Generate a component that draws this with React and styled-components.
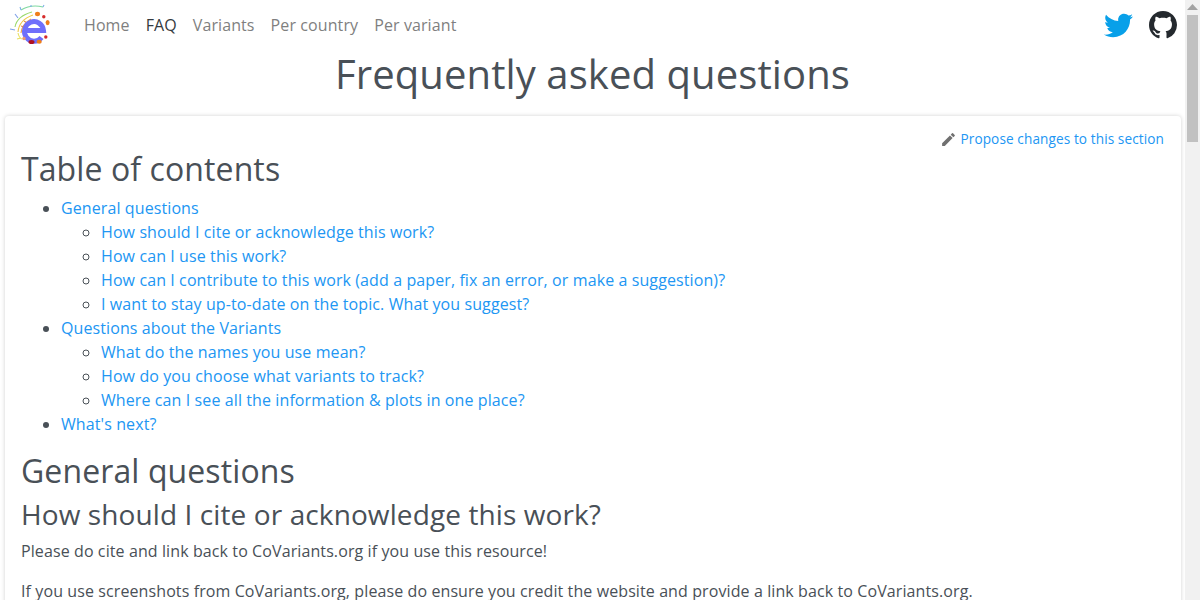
import React from "react";
import styled, { createGlobalStyle } from "styled-components";
import { FaTwitter } from "react-icons/fa";
import { MdEdit } from "react-icons/md";

const Global = createGlobalStyle`
  html, body { margin: 0; padding: 0; height: 600px; overflow: hidden; background: #fff; }
  body { font-family: "Open Sans", "Liberation Sans", sans-serif; font-size: 16px; line-height: 24px; color: #495057; letter-spacing: 0.1px; }
  * { box-sizing: border-box; }
`;

const Shell = styled.div`
  display: flex;
  width: 1200px;
  height: 600px;
  overflow: hidden;
`;
const Page = styled.div`
  flex: 1;
  min-width: 0;
  height: 600px;
  overflow: hidden;
`;
const Rail = styled.div`
  width: 15px;
  flex: none;
  background: #f1f1f1;
  display: flex;
  flex-direction: column;
  align-items: center;
`;
const Arrow = styled.div`
  height: 15px;
  display: flex;
  align-items: center;
  justify-content: center;
  color: #a3a3a3;
`;
const Thumb = styled.div`
  width: 11px;
  height: 127px;
  background: #c1c1c1;
`;

const Nav = styled.nav`
  height: 50px;
  display: flex;
  align-items: center;
  padding: 0 8px;
`;
const Brand = styled.a`
  width: 44px;
  height: 50px;
  display: flex;
  align-items: center;
  margin-right: 32px;
`;
const Links = styled.div`
  display: flex;
  gap: 16px;
  flex: 1;
`;
const NavLink = styled.a`
  color: ${(p) => (p.$active ? "#343a40" : "#7f7f7f")};
  text-decoration: none;
`;
const Social = styled.div`
  display: flex;
  align-items: center;
  gap: 16px;
`;

const Title = styled.h1`
  margin: 0;
  font-size: 40px;
  line-height: 48px;
  font-weight: 400;
  text-align: center;
  height: 66px;
`;
const Card = styled.section`
  margin: 0 4px 0 5px;
  padding: 12px 16px 0;
  background: #fff;
  border-radius: 4px;
  box-shadow: 0 0 4px rgba(0, 0, 0, 0.18);
  height: 600px;
`;
const EditRow = styled.div`
  display: flex;
  justify-content: flex-end;
  align-items: center;
  gap: 3px;
  height: 22px;
  padding-right: 1px;
  font-size: 13.6px;
`;
const Link = styled.a`
  color: #2196f3;
  text-decoration: none;
`;
const H2 = styled.h2`
  margin: 0 0 7px;
  font-size: 32px;
  line-height: 38px;
  font-weight: 400;
`;
const H3 = styled.h3`
  margin: 0 0 8px;
  font-size: 28px;
  line-height: 34px;
  font-weight: 400;
`;
const TocHead = styled(H2)`
  margin-bottom: 8px;
`;
const List = styled.ul`
  margin: 0 0 16px;
  padding-left: 40px;
  list-style: disc;
`;
const SubList = styled.ul`
  margin: 0;
  padding-left: 40px;
  list-style: circle;
`;
const Para = styled.p`
  margin: 0 0 16px;
`;

const Logo = () => (
  <svg width="44" height="50" viewBox="8 0 44 50" fill="none">
    <g strokeWidth="1.1" fill="none">
      <path d="M21 10 Q31 4 43 7" stroke="#7fd8a0" />
      <path d="M21 10 l-1 -3 M43 7 l1 -2 M31 7 l0 -2" stroke="#7fb0e8" />
      <path d="M15 27 Q17 16 32 12" stroke="#9ad86a" />
      <path d="M18 32 Q19 20 33 15" stroke="#f0c84a" />
      <path d="M21 33 Q22 24 31 19" stroke="#f2a64a" />
      <path d="M10 29 l5 1 M15 14 l3 4" stroke="#7fa0e8" />
      <path d="M18 33 Q19 38 22 39 M21 38 l-4 1" stroke="#e8e060" />
      <path d="M24 21 l3 2 M21 26 l3 1" stroke="#e08a4a" />
    </g>
    <path d="M25 30.5 H43.5 A9.5 9.8 0 1 0 41.5 37.5" stroke="#6f6ffb" strokeWidth="5" fill="none" />
    <ellipse cx="37.5" cy="14" rx="2.6" ry="2.2" fill="#ef7d1a" />
    <ellipse cx="47.6" cy="22.6" rx="2" ry="2.6" fill="#ef7d1a" />
    <circle cx="43.8" cy="16.8" r="1.7" fill="#d62b2b" />
    <circle cx="45.8" cy="37" r="1.7" fill="#d62b2b" />
    <ellipse cx="39.2" cy="41.8" rx="2.6" ry="2" fill="#ef7d1a" />
    <ellipse cx="31.5" cy="42" rx="3" ry="2.1" fill="#b01020" />
    <circle cx="24" cy="38.5" r="1.7" fill="#ee9a70" />
  </svg>
);

const GithubMark = () => (
  <svg width="28" height="28" viewBox="0 0 16 16" fill="#24292e">
    <path d="M8 0C3.58 0 0 3.58 0 8c0 3.54 2.29 6.53 5.47 7.59.4.07.55-.17.55-.38 0-.19-.01-.82-.01-1.49-2.01.37-2.53-.49-2.69-.94-.09-.23-.48-.94-.82-1.13-.28-.15-.68-.52-.01-.53.63-.01 1.08.58 1.23.82.72 1.21 1.87.87 2.33.66.07-.52.28-.87.51-1.07-1.78-.2-3.64-.89-3.64-3.95 0-.87.31-1.59.82-2.15-.08-.2-.36-1.02.08-2.12 0 0 .67-.21 2.2.82.64-.18 1.32-.27 2-.27.68 0 1.36.09 2 .27 1.53-1.04 2.2-.82 2.2-.82.44 1.1.16 1.92.08 2.12.51.56.82 1.27.82 2.15 0 3.07-1.87 3.75-3.65 3.95.29.25.54.73.54 1.48 0 1.07-.01 1.93-.01 2.2 0 .21.15.46.55.38A8.013 8.013 0 0016 8c0-4.42-3.58-8-8-8z" />
  </svg>
);

const Up = () => (
  <svg width="11" height="7" viewBox="0 0 11 7"><path d="M5.5 0 L11 6 H0 Z" fill="currentColor" /></svg>
);

export default function App() {
  return (
    <Shell>
      <Global />
      <Page>
        <Nav>
          <Brand href="#"><Logo /></Brand>
          <Links>
            <NavLink href="#">Home</NavLink>
            <NavLink href="#" $active>FAQ</NavLink>
            <NavLink href="#">Variants</NavLink>
            <NavLink href="#">Per country</NavLink>
            <NavLink href="#">Per variant</NavLink>
          </Links>
          <Social>
            <FaTwitter size={29} color="#08a0e9" />
            <GithubMark />
          </Social>
        </Nav>
        <Title>Frequently asked questions</Title>
        <Card>
          <EditRow>
            <MdEdit size={17} color="#707070" />
            <Link href="#">Propose changes to this section</Link>
          </EditRow>
          <TocHead>Table of contents</TocHead>
          <List>
            <li><Link href="#">General questions</Link>
              <SubList>
                <li><Link href="#">How should I cite or acknowledge this work?</Link></li>
                <li><Link href="#">How can I use this work?</Link></li>
                <li><Link href="#">How can I contribute to this work (add a paper, fix an error, or make a suggestion)?</Link></li>
                <li><Link href="#">I want to stay up-to-date on the topic. What you suggest?</Link></li>
              </SubList>
            </li>
            <li><Link href="#">Questions about the Variants</Link>
              <SubList>
                <li><Link href="#">What do the names you use mean?</Link></li>
                <li><Link href="#">How do you choose what variants to track?</Link></li>
                <li><Link href="#">Where can I see all the information &amp; plots in one place?</Link></li>
              </SubList>
            </li>
            <li><Link href="#">What's next?</Link></li>
          </List>
          <H2>General questions</H2>
          <H3>How should I cite or acknowledge this work?</H3>
          <Para>Please do cite and link back to CoVariants.org if you use this resource!</Para>
          <Para>If you use screenshots from CoVariants.org, please do ensure you credit the website and provide a link back to CoVariants.org.</Para>
        </Card>
      </Page>
      <Rail>
        <Arrow><Up /></Arrow>
        <Thumb />
      </Rail>
    </Shell>
  );
}
